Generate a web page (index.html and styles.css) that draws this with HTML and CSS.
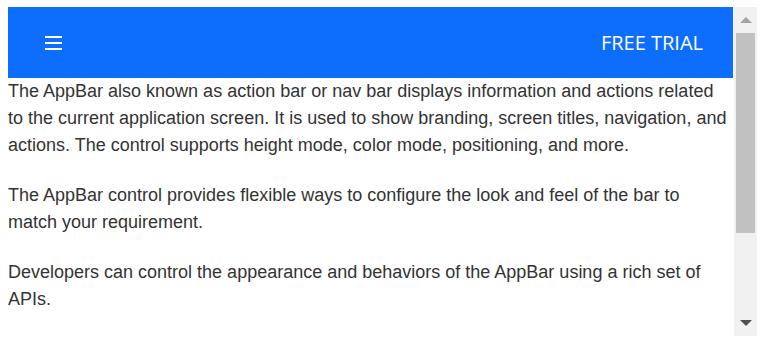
FILE: index.html
```html
<!DOCTYPE html>
<html lang="en">
<head>
  <meta charset="UTF-8" />
  <meta name="viewport" content="width=device-width, initial-scale=1.0" />
  <title>AppBar</title>
  <link rel="stylesheet" href="styles.css">
</head>
<body>

  <div class="frame">
    <div class="content">
      <header class="appbar">
        <button class="menu" aria-label="Menu">
          <svg width="17" height="14" viewBox="0 0 17 14">
            <rect x="0" y="0" width="17" height="2" fill="#fff" />
            <rect x="0" y="6" width="17" height="2" fill="#fff" />
            <rect x="0" y="12" width="17" height="2" fill="#fff" />
          </svg>
        </button>
        <span class="spacer"></span>
        <button class="trial">FREE TRIAL</button>
      </header>

      <p>The AppBar also known as action bar or nav bar displays information and actions related to the current application screen. It is used to show branding, screen titles, navigation, and actions. The control supports height mode, color mode, positioning, and more.</p>
      <p>The AppBar control provides flexible ways to configure the look and feel of the bar to match your requirement.</p>
      <p>Developers can control the appearance and behaviors of the AppBar using a rich set of APIs.</p>
    </div>

    <!-- Scrollbar -->
    <div class="scrollbar">
      <span class="arrow up"></span>
      <div class="track">
        <div class="thumb"></div>
      </div>
      <span class="arrow down"></span>
    </div>
  </div>

</body>
</html>
```

FILE: styles.css
```css
* {
  margin: 0;
  padding: 0;
  box-sizing: border-box;
}

body {
  background: #fff;
  font-family: 'Liberation Sans', Arial, sans-serif;
}

.frame {
  display: flex;
  gap: 1px;
  width: 749px;
  height: 329px;
  margin: 7px 0 0 8px;
  overflow: hidden;
}

.content {
  width: 725px;
  overflow: hidden;
}

.appbar {
  display: flex;
  align-items: center;
  height: 71px;
  padding: 0 30px 0 37px;
  background: #0d6efd;
}

.menu {
  display: flex;
  background: none;
  border: none;
}

.spacer {
  flex: 1;
}

.trial {
  background: none;
  border: none;
  color: #fff;
  font-family: 'Open Sans', 'Noto Sans', sans-serif;
  font-size: 20px;
  font-weight: 500;
}

.content p {
  font-size: 18px;
  line-height: 27px;
  color: #333;
  margin-bottom: 23px;
}

/* Scrollbar */
.scrollbar {
  width: 23px;
  display: flex;
  flex-direction: column;
  align-items: center;
  background: #f1f1f1;
}

.arrow {
  width: 0;
  height: 0;
  border-left: 6px solid transparent;
  border-right: 6px solid transparent;
  margin: 10px 0;
}

.arrow.up {
  border-bottom: 6px solid #a3a3a3;
}

.arrow.down {
  border-top: 6px solid #505050;
}

.track {
  flex: 1;
  width: 100%;
  padding: 0 2px;
}

.thumb {
  height: 200px;
  background: #c1c1c1;
}
```
